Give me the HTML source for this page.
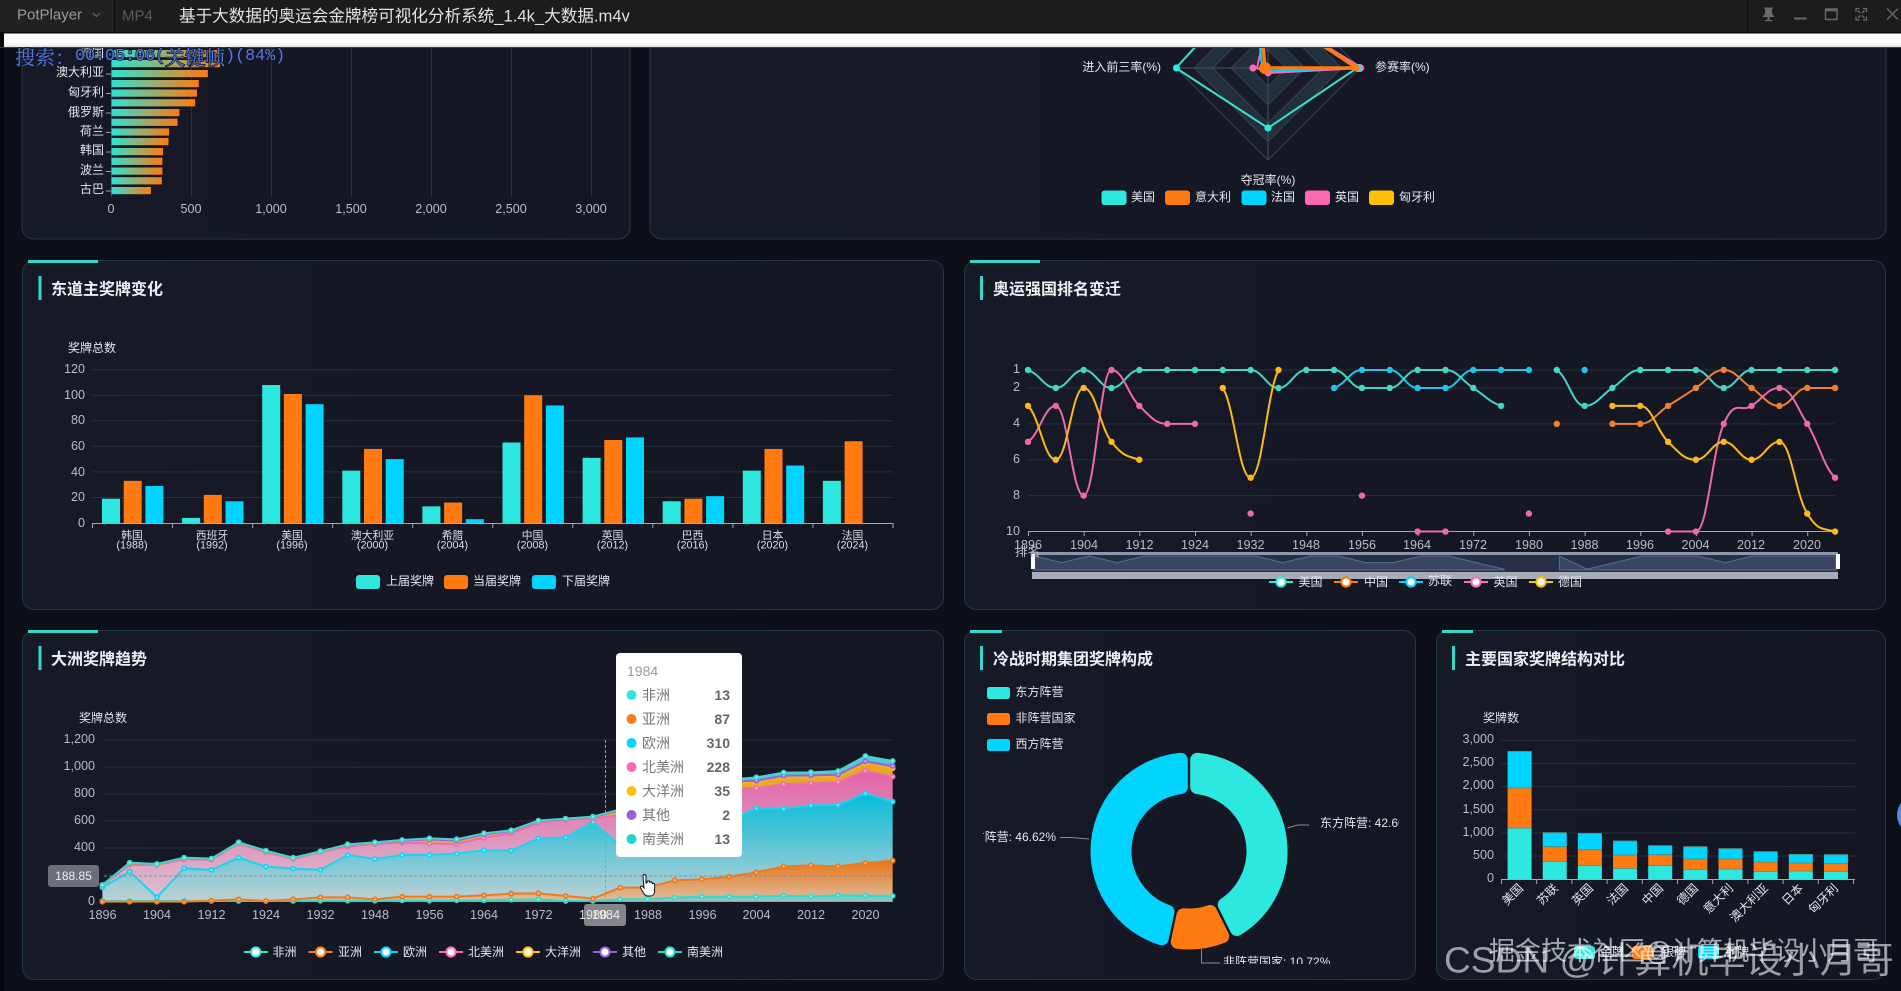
<!DOCTYPE html>
<html lang="zh"><head><meta charset="utf-8"><title>奥运会金牌榜可视化分析系统</title>
<style>
html,body{margin:0;padding:0;background:#0d1018;width:1901px;height:991px;overflow:hidden}
svg{position:absolute;left:0;top:0;display:block;filter:blur(.35px)}
text{font-family:"Liberation Sans","Noto Sans CJK SC",sans-serif;dominant-baseline:central;font-size:12px;fill:#e4e6ec}
.ax{fill:#b8bcc6;font-size:12.6px}
.e{text-anchor:end}.m{text-anchor:middle}
.t{font-size:16px;font-weight:700;fill:#eceef2}
.n{font-size:10.8px;fill:#dcdfe6;text-anchor:middle}
.tt{font-size:14px;fill:#777}.tv{font-size:14px;font-weight:700;fill:#666;text-anchor:end}
</style></head><body>
<svg xmlns="http://www.w3.org/2000/svg" width="1901" height="991" viewBox="0 0 1901 991">
<defs>
<linearGradient id="bg1" x1="0" x2="1" y1="0" y2="0"><stop offset="0" stop-color="#2ee3d2"/><stop offset="1" stop-color="#ff7a10"/></linearGradient>
<linearGradient id="aT" x1="0" x2="0" y1="0" y2="1"><stop offset="0" stop-color="#2de8de"/><stop offset="1" stop-color="#b0b8b8"/></linearGradient>
<linearGradient id="aO" x1="0" x2="0" y1="0" y2="1"><stop offset="0" stop-color="#ea7418"/><stop offset="1" stop-color="#dcc0a4"/></linearGradient>
<linearGradient id="aC" x1="0" x2="0" y1="0" y2="1"><stop offset="0" stop-color="#06bcd8"/><stop offset="1" stop-color="#bfd0d4"/></linearGradient>
<linearGradient id="aP" x1="0" x2="0" y1="0" y2="1"><stop offset="0" stop-color="#e264a8"/><stop offset="1" stop-color="#dcc0d0"/></linearGradient>
<linearGradient id="aY" x1="0" x2="0" y1="0" y2="1"><stop offset="0" stop-color="#e8a820"/><stop offset="1" stop-color="#d8b860"/></linearGradient>
<linearGradient id="aV" x1="0" x2="0" y1="0" y2="1"><stop offset="0" stop-color="#9b6cd8"/><stop offset="1" stop-color="#a890c8"/></linearGradient>
<linearGradient id="aS" x1="0" x2="0" y1="0" y2="1"><stop offset="0" stop-color="#4fc8dc"/><stop offset="1" stop-color="#70b8c8"/></linearGradient>
<linearGradient id="wf" x1="0" x2="0" y1="0" y2="1"><stop offset="0" stop-color="#fff"/><stop offset=".7" stop-color="#fff"/><stop offset="1" stop-color="#e6e8f0"/></linearGradient>
<linearGradient id="cg" x1="0" x2="1" y1="0" y2="0"><stop offset="0" stop-color="#161926"/><stop offset="1" stop-color="#141722"/></linearGradient>
<clipPath id="cTop"><rect x="0" y="47" width="1901" height="300"/></clipPath>
<clipPath id="cPie"><rect x="983" y="680" width="416" height="284"/></clipPath>
</defs>

<rect width="1901" height="991" fill="#0d1018"/>
<rect width="4" height="991" fill="#07080c"/>

<!-- cards -->
<g fill="url(#cg)" stroke="#233a40" stroke-width="1">
<path d="M22 40H630V227a12 12 0 0 1-12 12H34a12 12 0 0 1-12-12Z"/>
<path d="M650 40H1886V227a12 12 0 0 1-12 12H662a12 12 0 0 1-12-12Z"/>
<rect x="22.5" y="260.5" width="921" height="349" rx="12"/>
<rect x="964.5" y="260.5" width="921" height="349" rx="12"/>
<rect x="22.5" y="630.5" width="921" height="349" rx="12"/>
<rect x="964.5" y="630.5" width="451" height="349" rx="12"/>
<rect x="1436.5" y="630.5" width="449" height="349" rx="12"/>
</g>
<g fill="#35d8cb">
<rect x="28" y="260" width="70" height="3"/><rect x="970" y="260" width="70" height="3"/>
<rect x="28" y="630" width="70" height="3"/><rect x="970" y="630" width="32" height="3"/><rect x="1442" y="630" width="31" height="3"/>
<rect x="38.5" y="276" width="3" height="24"/><rect x="980" y="276" width="3" height="24"/>
<rect x="38.5" y="646" width="3" height="24"/><rect x="980" y="646" width="3" height="24"/><rect x="1452" y="646" width="3" height="24"/>
</g>
<text class="t" x="51" y="290">东道主奖牌变化</text>
<text class="t" x="993" y="290">奥运强国排名变迁</text>
<text class="t" x="51" y="660">大洲奖牌趋势</text>
<text class="t" x="993" y="660">冷战时期集团奖牌构成</text>
<text class="t" x="1465" y="660">主要国家奖牌结构对比</text>

<!-- top-left bars -->
<g id="gTL" clip-path="url(#cTop)"></g>
<g clip-path="url(#cTop)">
<text class="e" x="104" y="53">德国</text>
<text class="e" x="104" y="72">澳大利亚</text><text class="e" x="104" y="92">匈牙利</text><text class="e" x="104" y="112">俄罗斯</text><text class="e" x="104" y="131">荷兰</text><text class="e" x="104" y="150">韩国</text><text class="e" x="104" y="170">波兰</text><text class="e" x="104" y="189">古巴</text>
</g>
<g class="ax"><text class="ax m" x="111" y="209">0</text><text class="ax m" x="191" y="209">500</text><text class="ax m" x="271" y="209">1,000</text><text class="ax m" x="351" y="209">1,500</text><text class="ax m" x="431" y="209">2,000</text><text class="ax m" x="511" y="209">2,500</text><text class="ax m" x="591" y="209">3,000</text></g>

<!-- radar -->
<g id="gRad" clip-path="url(#cTop)"></g>
<text class="e" x="1161" y="67">进入前三率(%)</text><text x="1375" y="67">参赛率(%)</text><text class="m" x="1268" y="180">夺冠率(%)</text>
<g><rect x="1101.5" y="190.5" width="25" height="14.5" rx="3" fill="#2de8de"/><rect x="1165" y="190.5" width="25" height="14.5" rx="3" fill="#ff7a10"/><rect x="1241.5" y="190.5" width="25" height="14.5" rx="3" fill="#00d4ff"/><rect x="1305" y="190.5" width="25" height="14.5" rx="3" fill="#ff69b4"/><rect x="1369" y="190.5" width="25" height="14.5" rx="3" fill="#ffc107"/></g>
<text x="1131" y="197">美国</text><text x="1195" y="197">意大利</text><text x="1271" y="197">法国</text><text x="1335" y="197">英国</text><text x="1399" y="197">匈牙利</text>

<!-- host bars -->
<g id="gHost"></g>
<text x="68" y="348">奖牌总数</text>
<text class="ax e" x="85" y="369">120</text><text class="ax e" x="85" y="395">100</text><text class="ax e" x="85" y="420">80</text><text class="ax e" x="85" y="446">60</text><text class="ax e" x="85" y="472">40</text><text class="ax e" x="85" y="497">20</text><text class="ax e" x="85" y="523">0</text>
<g>
<text class="n" x="132" y="536">韩国</text><text class="n" x="132" y="545.5">(1988)</text>
<text class="n" x="212" y="536">西班牙</text><text class="n" x="212" y="545.5">(1992)</text>
<text class="n" x="292" y="536">美国</text><text class="n" x="292" y="545.5">(1996)</text>
<text class="n" x="372.5" y="536">澳大利亚</text><text class="n" x="372.5" y="545.5">(2000)</text>
<text class="n" x="452.5" y="536">希腊</text><text class="n" x="452.5" y="545.5">(2004)</text>
<text class="n" x="532.5" y="536">中国</text><text class="n" x="532.5" y="545.5">(2008)</text>
<text class="n" x="612.5" y="536">英国</text><text class="n" x="612.5" y="545.5">(2012)</text>
<text class="n" x="692.5" y="536">巴西</text><text class="n" x="692.5" y="545.5">(2016)</text>
<text class="n" x="772.5" y="536">日本</text><text class="n" x="772.5" y="545.5">(2020)</text>
<text class="n" x="852.5" y="536">法国</text><text class="n" x="852.5" y="545.5">(2024)</text>
</g>
<rect x="356" y="575" width="24" height="14" rx="3" fill="#2de8de"/><rect x="444" y="575" width="24" height="14" rx="3" fill="#ff7a10"/><rect x="532" y="575" width="24" height="14" rx="3" fill="#00d4ff"/>
<text x="386" y="581">上届奖牌</text><text x="473" y="581">当届奖牌</text><text x="562" y="581">下届奖牌</text>

<!-- rank chart -->
<g id="gRank"></g>
<g>
<text class="ax e" x="1020" y="369">1</text><text class="ax e" x="1020" y="387">2</text><text class="ax e" x="1020" y="423">4</text><text class="ax e" x="1020" y="459">6</text><text class="ax e" x="1020" y="495">8</text><text class="ax e" x="1020" y="531">10</text>
<text class="ax m" x="1028" y="545">1896</text><text class="ax m" x="1084" y="545">1904</text><text class="ax m" x="1139.5" y="545">1912</text><text class="ax m" x="1195" y="545">1924</text><text class="ax m" x="1250.5" y="545">1932</text><text class="ax m" x="1306" y="545">1948</text><text class="ax m" x="1362" y="545">1956</text><text class="ax m" x="1417" y="545">1964</text><text class="ax m" x="1473" y="545">1972</text><text class="ax m" x="1529" y="545">1980</text><text class="ax m" x="1584.5" y="545">1988</text><text class="ax m" x="1640" y="545">1996</text><text class="ax m" x="1695.5" y="545">2004</text><text class="ax m" x="1751" y="545">2012</text><text class="ax m" x="1807" y="545">2020</text>
</g>
<g id="gSlider"></g>
<text class="ax" x="1015" y="552">排名</text>
<text x="1298.5" y="582">美国</text><text x="1364" y="582">中国</text><text x="1428" y="581">苏联</text><text x="1493.5" y="582">英国</text><text x="1558" y="582">德国</text>

<!-- area chart -->
<g id="gArea"></g>
<text x="79" y="718">奖牌总数</text>
<text class="ax e" x="95" y="739">1,200</text><text class="ax e" x="95" y="766">1,000</text><text class="ax e" x="95" y="793">800</text><text class="ax e" x="95" y="820">600</text><text class="ax e" x="95" y="847">400</text><text class="ax e" x="95" y="901">0</text>
<g>
<text class="ax m" x="102.5" y="915">1896</text><text class="ax m" x="157" y="915">1904</text><text class="ax m" x="211.5" y="915">1912</text><text class="ax m" x="266" y="915">1924</text><text class="ax m" x="320.5" y="915">1932</text><text class="ax m" x="375" y="915">1948</text><text class="ax m" x="429.5" y="915">1956</text><text class="ax m" x="484" y="915">1964</text><text class="ax m" x="538.5" y="915">1972</text><text class="ax m" x="648" y="915">1988</text><text class="ax m" x="702.5" y="915">1996</text><text class="ax m" x="756.5" y="915">2004</text><text class="ax m" x="811" y="915">2012</text><text class="ax m" x="865.5" y="915">2020</text>
</g>
<path d="M104 876H893" stroke="#8a8d96" stroke-dasharray="3 2" fill="none"/>
<path d="M605.5 740V901" stroke="#9a9da6" stroke-dasharray="3 2" fill="none"/>
<rect x="48" y="865" width="51" height="22" rx="3" fill="#6e7079"/><text class="m" x="73.5" y="876" style="fill:#eee">188.85</text>
<rect x="584" y="904" width="42" height="22" rx="3" fill="#85868c"/><text class="ax m" x="593" y="915" style="fill:#e4e4e8">1980</text><text class="m" x="606" y="915" style="fill:#eee;font-size:12.6px">1984</text>
<text x="272.5" y="952">非洲</text><text x="338" y="952">亚洲</text><text x="403" y="952">欧洲</text><text x="468" y="952">北美洲</text><text x="545" y="952">大洋洲</text><text x="622" y="952">其他</text><text x="687" y="952">南美洲</text>
<g id="gLeg"></g>
<rect x="616" y="653" width="126" height="204" rx="4" fill="#fff"/>
<text x="627" y="671" style="font-size:14px;fill:#999">1984</text>
<g id="gTip"></g>
<text class="tt" x="642" y="695">非洲</text><text class="tv" x="730" y="695">13</text>
<text class="tt" x="642" y="719">亚洲</text><text class="tv" x="730" y="719">87</text>
<text class="tt" x="642" y="743">欧洲</text><text class="tv" x="730" y="743">310</text>
<text class="tt" x="642" y="767">北美洲</text><text class="tv" x="730" y="767">228</text>
<text class="tt" x="642" y="791">大洋洲</text><text class="tv" x="730" y="791">35</text>
<text class="tt" x="642" y="815">其他</text><text class="tv" x="730" y="815">2</text>
<text class="tt" x="642" y="839">南美洲</text><text class="tv" x="730" y="839">13</text>
<path d="M643 876a1.5 1.5 0 0 1 3 0v7h1v-1a1.3 1.3 0 0 1 2.6 0v1a1.3 1.3 0 0 1 2.6 0v1a1.3 1.3 0 0 1 2.4 0v7c0 3-1.5 5-4 5h-3c-2 0-3-1-4-3l-3-5c-.8-1.5 1-2.6 2-1.5l1.4 1.5z" fill="#fff" stroke="#111" stroke-width="1"/>

<!-- donut -->
<rect x="987" y="687" width="23" height="12" rx="2.5" fill="#2de8de"/><rect x="987" y="713" width="23" height="12" rx="2.5" fill="#ff7a10"/><rect x="987" y="739" width="23" height="12" rx="2.5" fill="#00d4ff"/>
<text x="1015.5" y="692">东方阵营</text><text x="1015.5" y="718">非阵营国家</text><text x="1015.5" y="744">西方阵营</text>
<g id="gPie"></g>
<g clip-path="url(#cPie)">
<path d="M1287.5 828L1298 825H1309M1060 837.5L1071 837.5L1089 839M1201.5 949V963H1220" fill="none" stroke="#8a8d96"/>
<text x="1320" y="823">东方阵营: 42.66%</text>
<text class="e" x="1056" y="837">西方阵营: 46.62%</text>
<text x="1223" y="962">非阵营国家: 10.72%</text>
</g>

<!-- stacked -->
<g id="gStack"></g>
<text x="1483" y="718">奖牌数</text>
<text class="ax e" x="1494" y="739">3,000</text><text class="ax e" x="1494" y="762">2,500</text><text class="ax e" x="1494" y="785">2,000</text><text class="ax e" x="1494" y="809">1,500</text><text class="ax e" x="1494" y="832">1,000</text><text class="ax e" x="1494" y="855">500</text><text class="ax e" x="1494" y="878">0</text>
<g>
<text class="e" transform="translate(1521 886) rotate(-45)">美国</text>
<text class="e" transform="translate(1556 886) rotate(-45)">苏联</text>
<text class="e" transform="translate(1591 886) rotate(-45)">英国</text>
<text class="e" transform="translate(1626 886) rotate(-45)">法国</text>
<text class="e" transform="translate(1661 886) rotate(-45)">中国</text>
<text class="e" transform="translate(1696 886) rotate(-45)">德国</text>
<text class="e" transform="translate(1731 886) rotate(-45)">意大利</text>
<text class="e" transform="translate(1766 886) rotate(-45)">澳大利亚</text>
<text class="e" transform="translate(1801 886) rotate(-45)">日本</text>
<text class="e" transform="translate(1836 886) rotate(-45)">匈牙利</text>
</g>
<rect x="1574" y="946" width="21" height="13" rx="3" fill="#2de8de"/><rect x="1632" y="946" width="21" height="13" rx="3" fill="#ff7a10"/><rect x="1698" y="946" width="21" height="13" rx="3" fill="#00d4ff"/>
<text x="1600" y="952">金牌</text><text x="1662" y="952">银牌</text><text x="1725" y="952">铜牌</text>
<circle cx="1917" cy="815" r="20" fill="#4a8fe0"/>

<!-- white strip + title bar -->
<rect x="4" y="33" width="1897" height="14" fill="url(#wf)"/>
<rect x="0" y="47" width="1901" height="1" fill="#3a3c44"/>
<rect x="0" y="0" width="1901" height="33" fill="#1c1c1c"/>
<rect x="0" y="0" width="114" height="33" fill="#212121"/>
<rect x="114" y="0" width="1" height="33" fill="#0b0b0b"/><rect x="1747" y="0" width="1" height="33" fill="#0b0b0b"/>
<rect x="0" y="32" width="1901" height="1.5" fill="#0a0a0a"/>
<text x="17" y="15" style="font-size:15px;fill:#9b9b9b">PotPlayer</text>
<path d="M93 13l3.5 3.5 3.5-3.5" fill="none" stroke="#666" stroke-width="1.2"/>
<text x="122" y="16" style="font-size:15px;fill:#5c5c5c">MP4</text>
<text x="179" y="16" style="font-size:16.6px;fill:#e2e2e2">基于大数据的奥运会金牌榜可视化分析系统_1.4k_大数据.m4v</text>
<g fill="#6a6a6a">
<path d="M1763.5 7.5h10l-1.5 1.5v4.5l2.5 3.5h-5v3h2.5v1.2h-7v-1.2h2.5v-3h-5l2.5-3.5V9z"/>
<rect x="1794" y="17.5" width="12.5" height="2"/>
</g>
<path d="M1825.5 9h11.5v10.5h-11.5zM1825.5 10.5h11.5" fill="none" stroke="#6a6a6a" stroke-width="1.4"/>
<path d="M1856 12V8.5h3.5M1863 8.5h3.5V12M1866.5 16.5v3.5h-3.5M1859.5 20H1856v-3.5M1858 10.5l2.5 2.5M1864.5 10.5l-2.5 2.5M1858 18l2.5-2.5M1864.5 18l-2.5-2.5" fill="none" stroke="#6a6a6a" stroke-width="1.3"/>
<path d="M1887 8.5l11 11M1898 8.5l-11 11" fill="none" stroke="#6a6a6a" stroke-width="1.4"/>

<!-- OSD -->
<text x="15" y="56" style="font-family:'Noto Serif CJK SC',serif;font-size:20px;fill:#5a78de;stroke:#10182e;stroke-width:1.5px;paint-order:stroke">搜索：<tspan style="font-family:'Liberation Mono',monospace;font-size:16.7px">00:05:06(</tspan>关键帧<tspan style="font-family:'Liberation Mono',monospace;font-size:16.7px">)(84%)</tspan></text>

<!-- watermark -->
<text x="1444" y="960" textLength="450" lengthAdjust="spacingAndGlyphs" style="font-size:36px;fill:#fff;fill-opacity:.58">CSDN @计算机毕设小月哥</text>
<text x="1489" y="951" textLength="390" lengthAdjust="spacingAndGlyphs" style="font-size:26px;fill:#fff;fill-opacity:.62">掘金技术社区@计算机毕设小月哥</text>
</svg>
<script>
(function(){
var NS='http://www.w3.org/2000/svg',T='#2de8de',O='#ff7a10',C='#00d4ff',P='#ff69b4',Y='#ffc107',V='#9b5fd6',S='#1fd8c8',G='#2b2f3b',AX='#a4a8b2';
function $(i){return document.getElementById(i)}
function el(g,t,a){var e=document.createElementNS(NS,t);for(var k in a)e.setAttribute(k,a[k]);g.appendChild(e);return e}
function line(g,x1,y1,x2,y2,c,w){el(g,'line',{x1:x1,y1:y1,x2:x2,y2:y2,stroke:c,'stroke-width':w||1})}
function rect(g,x,y,w,h,f){el(g,'rect',{x:x,y:y,width:w,height:h,fill:f})}
function dot(g,x,y,r,f){el(g,'circle',{cx:x,cy:y,r:r,fill:f})}
function leg(g,x,y,c){line(g,x-12,y,x+12,y,c,2);el(g,'circle',{cx:x,cy:y,r:4.6,fill:'#fff',stroke:c,'stroke-width':2})}

/* top-left */
var g=$('gTL');
[111,191,271,351,431,511,591].forEach(function(x,i){line(g,x+.5,47,x+.5,197,i?G:'#3a3e4a')});
[360,362,342,327,324,321,295,292,278,277,268,267,267,266,248].forEach(function(z,i){
 var y=[50,60,70,80,89.5,99.2,109,118.7,128.4,138,148,157.7,167.5,177.2,187][i];
 rect(g,111.5,y,(z-183)/1.65,7.2,'url(#bg1)');
 if(i%2==0&&i>1||i==0)line(g,106,y+4,111,y+4,'#9a9ea8');
});

/* radar */
g=$('gRad');var cx=1268,cy=68,R=92;
[1,.8,.6,.4,.2].forEach(function(f,i){var r=R*f;
 el(g,'path',{d:'M'+(cx-r)+' '+cy+'L'+cx+' '+(cy+r)+'L'+(cx+r)+' '+cy+'L'+cx+' '+(cy-r)+'Z',fill:i%2?'#222f3d':'#181c28',stroke:'#3a424e'})});
line(g,cx-R,cy,cx+R,cy,'#4a5058');line(g,cx,cy-R,cx,cy+R,'#4a5058');
el(g,'path',{d:'M1196 46L1176 68L1268 128L1357 68L1322 46',fill:'none',stroke:'#3ddccf','stroke-width':2});
el(g,'path',{d:'M1262 46L1257 68L1268 73L1362 68L1326 46',fill:'none',stroke:P,'stroke-width':2});
el(g,'path',{d:'M1260 46L1262 68L1268 71L1358 68L1322 46',fill:'none',stroke:C,'stroke-width':2});
el(g,'path',{d:'M1263 46L1265 68H1357L1324 46',fill:'none',stroke:O,'stroke-width':3.5});
dot(g,1176.5,68,3.6,T);dot(g,1268,128,3.6,T);dot(g,1253,68,3.6,P);dot(g,1268,73,3.4,P);dot(g,1360,68,4,P);dot(g,1358,68,4,T);dot(g,1265,68,6,O);dot(g,1356,68,3.5,O);

/* host */
g=$('gHost');
[0,20,40,60,80,100,120].forEach(function(v){var y=523-v*1.2775;if(v)line(g,92,y,893,y,G)});
var hd=[[19,33,29],[4,22,17],[108,101,93],[41,58,50],[13,16,3],[63,100,92],[51,65,67],[17,19,21],[41,58,45],[33,64,0]];
hd.forEach(function(a,i){var s=92+i*80.1;[T,O,C].forEach(function(c,j){if(a[j])rect(g,s+10+j*21.7,523-a[j]*1.2775,18,a[j]*1.2775,c)})});
line(g,92,523.5,893,523.5,AX);for(var i=0;i<=10;i++)line(g,92.5+i*80.05,523,92.5+i*80.05,528,AX);

/* rank */
g=$('gRank');
function rx(i){return 1028+i*27.83}function ry(r){return 370+(r-1)*17.95}
[1,2,4,6,8].forEach(function(r){line(g,1028,ry(r),1835,ry(r),G)});
line(g,1028,531.5,1835,531.5,AX);
for(i=0;i<15;i++)line(g,rx(i*2)+.5,531,rx(i*2)+.5,536,AX);
var n=null;
var US=[1,2,1,2,1,1,1,1,1,2,1,1,2,2,1,1,2,3,n,1,3,2,1,1,1,2,1,1,1,1],
CN=[n,n,n,n,n,n,n,n,n,n,n,n,n,n,n,n,n,n,n,4,n,4,4,3,2,1,2,3,2,2],
SU=[n,n,n,n,n,n,n,n,n,n,n,2,1,1,2,2,1,1,1,n,1,n,n,n,n,n,n,n,n,n],
UK=[5,3,8,1,3,4,4,n,9,n,n,n,8,n,10,10,n,n,9,n,n,n,n,10,10,4,3,2,4,7],
DE=[3,6,2,5,6,n,n,2,7,1,n,n,n,n,n,n,n,n,n,n,n,3,3,5,6,5,6,5,9,10];
function seg(d,col,w){
 var a=[],s=null;d.forEach(function(v,i){if(v!==n){if(!s){s=[];a.push(s)}s.push([rx(i),ry(v)])}else s=null});
 a.forEach(function(p){
  if(p.length>1){var m=p.map(function(q,j){
    if(j==0)return (p[1][1]-q[1])/(p[1][0]-q[0])*.5;
    if(j==p.length-1)return (q[1]-p[j-1][1])/(q[0]-p[j-1][0])*.5;
    var d1=q[1]-p[j-1][1],d2=p[j+1][1]-q[1];
    if(d1*d2<=0)return 0;
    return (p[j+1][1]-p[j-1][1])/(p[j+1][0]-p[j-1][0])});
   var dd='M'+p[0][0]+' '+p[0][1];
   for(var j=0;j<p.length-1;j++){var k=(p[j+1][0]-p[j][0])*.42;
    dd+='C'+(p[j][0]+k)+' '+(p[j][1]+m[j]*k)+' '+(p[j+1][0]-k)+' '+(p[j+1][1]-m[j+1]*k)+' '+p[j+1][0]+' '+p[j+1][1]}
   el(g,'path',{d:dd,fill:'none',stroke:col,'stroke-width':w||2})}
  p.forEach(function(q){dot(g,q[0],q[1],3.2,col)})})}
seg(SU,'#22c4ea');seg(US,'#45d6c8');seg(CN,'#f08030');seg(UK,'#ec6aa8');seg(DE,'#fbb91a');

/* slider */
g=$('gSlider');
rect(g,1032,552,806,20,'#262e48');rect(g,1032,552,806,3,'#8e96ac');
var xs=function(i){return 1034+i*27.65},ys=function(r){return 556+(r-1)*6.6};
function mini(from,to){var d='M'+xs(from)+' 570';for(var i=from;i<=to;i++)d+='L'+xs(i)+' '+ys(US[i]);d+='L'+xs(to)+' 570Z';el(g,'path',{d:d,fill:'#3a4562',stroke:'#5e6b92'})}
mini(0,17);mini(19,29);
rect(g,1032,572,806,7,'#a8acb8');
rect(g,1031,554,4,15,'#fff');rect(g,1836,554,4,15,'#fff');
[[1281,T],[1346,O],[1411,C],[1476,P],[1541,Y]].forEach(function(a){leg(g,a[0],582,a[1])});

/* area */
g=$('gArea');
[740,767,794,821,848,874].forEach(function(y){line(g,103.6,y,893,y,G)});
var A=[843,843,843,843,843,843,843,843,842,842,842,841,842,841,841,839,838,843,843,838,837,833,830,830,830,827,829,826,827,828],
B=[845,845,845,845,842,838,843,838,832,832,838,830,830,830,826,821,820,828,836,803,803,781,778,770,757,739,736,739,729,722],
Cc=[802,755,832,745,750,713,740,746,750,705,717,705,705,701,691,692,655,652,606,678,655,640,620,600,565,566,556,555,520,545],
D=[796,735,735,718,720,670,697,717,697,680,672,668,670,672,653,640,608,600,595,586,560,530,510,505,505,492,490,486,452,470],
E=[795,732,733,715,718,668,694,715,695,676,669,663,660,665,645,634,604,597,592,572,545,515,495,490,488,473,472,470,430,445],
F=[795,730,732,714,717,667,693,714,694,675,668,662,658,662,643,633,603,597,591,571,540,508,488,484,482,467,466,464,424,438],
Gg=[795,728,732,713,716,667,692,713,694,673,667,660,655,658,640,631,602,596,590,568,535,503,483,479,472,458,457,453,408,423],
Z=A.map(function(){return 843});
function ax(i){return 102.4+i*27.25}function ay(z){return 620+z/3}
var L=[[A,Z,'aT','#39d8cc'],[B,A,'aO','#ec7c20'],[Cc,B,'aC','#1cd2f0'],[D,Cc,'aP','#ef6cb0'],[E,D,'aY','#f2b020'],[F,E,'aV','#9a64d8'],[Gg,F,'aS','#3fd6d0']];
L.forEach(function(s){var d='';s[0].forEach(function(z,i){d+=(i?'L':'M')+ax(i)+' '+ay(z)});
 for(var i=29;i>=0;i--)d+='L'+ax(i)+' '+ay(s[1][i]);d+='Z';el(g,'path',{d:d,fill:'url(#'+s[2]+')'})});
L.forEach(function(s){var d='';s[0].forEach(function(z,i){d+=(i?'L':'M')+ax(i)+' '+ay(z)});el(g,'path',{d:d,fill:'none',stroke:s[3],'stroke-width':2});
 s[0].forEach(function(z,i){dot(g,ax(i),ay(z),2.9,s[3]);el(g,'circle',{cx:ax(i),cy:ay(z),r:1.1,fill:'#fff','fill-opacity':.55})})});
line(g,103,901.5,893,901.5,'#9a9ea8');
g=$('gLeg');[[255.8,T],[320.6,O],[386,C],[451,P],[528,Y],[605,V],[670,S]].forEach(function(a){leg(g,a[0],952,a[1])});
g=$('gTip');[[695,T],[719,O],[743,C],[767,P],[791,Y],[815,V],[839,S]].forEach(function(a){dot(g,631.5,a[0],5,a[1])});

/* donut */
g=$('gPie');
function sector(a0,a1,c){var X=1189,Y0=851,ro=98.5,ri=57.5,r=7,gap=1.2;
 var Ro=ro-r,Ri=ri+r,da0=(r+gap)/Ro,da1=(r+gap)/Ri;
 function pt(rr,a){return (X+rr*Math.sin(a)).toFixed(2)+' '+(Y0-rr*Math.cos(a)).toFixed(2)}
 var s=a0*Math.PI/180,e=a1*Math.PI/180;
 var big=(e-s)>Math.PI?1:0;
 var d='M'+pt(Ro,s+da0)+'A'+Ro+' '+Ro+' 0 '+big+' 1 '+pt(Ro,e-da0)+'L'+pt(Ri,e-da1)+'A'+Ri+' '+Ri+' 0 '+big+' 0 '+pt(Ri,s+da1)+'Z';
 el(g,'path',{d:d,fill:c,stroke:c,'stroke-width':r*2,'stroke-linejoin':'round'})}
sector(0,153.6,T);sector(153.6,192.2,O);sector(192.2,360,C);

/* stacked */
g=$('gStack');
[0,1,2,3,4,5].forEach(function(k){var y=740.3+k*23.15;line(g,1501.5,y,1855,y,G)});
var st=[[623,503,393],[723,679,637],[735,688,639],[744,704,662],[735,703,676],[747,716,679],[746,716,685],[753,725,694],[752,728,702],[753,730,703]];
st.forEach(function(a,i){var x=1507.6+i*35.15,b=879;[T,O,C].forEach(function(c,j){var t=620+a[j]/3;rect(g,x,t,24,b-t,c);rect(g,x,t,24,.8,'#5a8a70');b=t})});
line(g,1501.5,879.5,1855,879.5,AX);for(i=0;i<=10;i++)line(g,1501.5+i*35.2,879,1501.5+i*35.2,884,AX);
})();
</script>
</body></html>
